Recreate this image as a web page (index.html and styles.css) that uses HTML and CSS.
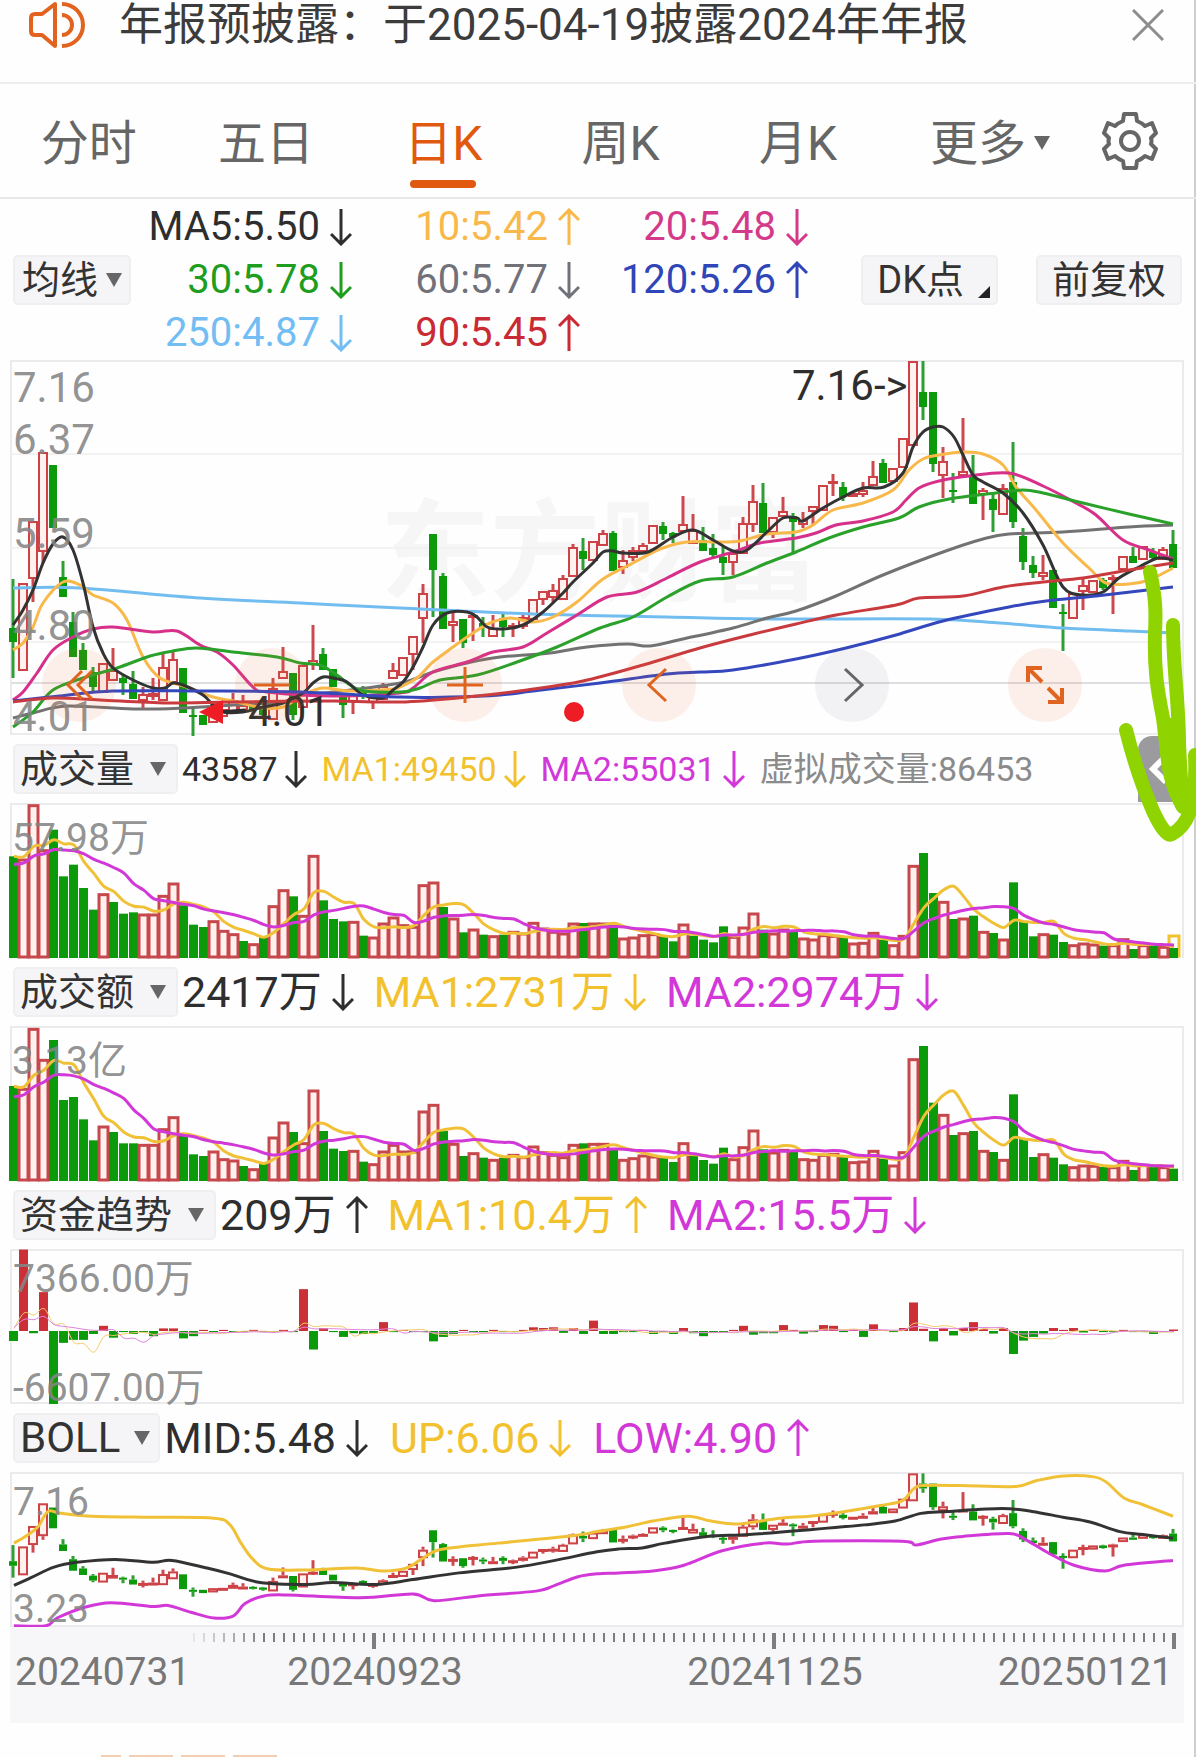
FILE: index.html
```html
<!DOCTYPE html>
<html lang="zh-CN">
<head>
<meta charset="utf-8">
<meta name="viewport" content="width=device-width, initial-scale=1">
<title>日K</title>
<link rel="stylesheet" href="styles.css">
</head>
<body>
<svg class="sprite" aria-hidden="true">
  <symbol id="down" viewBox="0 0 22 38"><path d="M11 1V36M1 26L11 36L21 26" fill="none" stroke="currentColor" stroke-width="3"/></symbol>
  <symbol id="up" viewBox="0 0 22 38"><path d="M11 37V2M1 12L11 2L21 12" fill="none" stroke="currentColor" stroke-width="3"/></symbol>
  <symbol id="caret" viewBox="0 0 16 14"><path d="M0 0H16L8 14Z" fill="currentColor"/></symbol>
</svg>
<main class="screen">
  <header class="notice">
    <svg class="horn" viewBox="0 0 56 48" aria-hidden="true"><g fill="none" stroke="currentColor" stroke-width="4" stroke-linejoin="round"><path d="M26 3V45L13 34H6Q2 34 2 30V17Q2 13 6 13H13Z"/><path d="M33 3A21 21 0 0 1 33 45"/><path d="M33 14A10 10 0 0 1 33 34"/></g></svg>
    <p class="notice-text">年报预披露：于2025-04-19披露2024年年报</p>
    <button class="icon-button" aria-label="关闭"><svg class="close" viewBox="0 0 32 32"><path d="M1 1L31 31M31 1L1 31" stroke="currentColor" stroke-width="3"/></svg></button>
  </header>

  <nav class="tabs">
    <button class="tab">分时</button>
    <button class="tab">五日</button>
    <button class="tab active">日K</button>
    <button class="tab">周K</button>
    <button class="tab">月K</button>
    <button class="tab more">更多<svg class="caret"><use href="#caret"/></svg></button>
    <button class="icon-button settings" aria-label="设置"><svg class="gear" viewBox="0 0 56 58"><g fill="none" stroke="currentColor" stroke-width="4" stroke-linejoin="round"><path d="M22 2H34L35 9Q40 11 43 14L50 11L54 21L49 26Q50 29 49 32L54 37L50 47L43 44Q40 47 35 49L34 56H22L21 49Q16 47 13 44L6 47L2 37L7 32Q6 29 7 26L2 21L6 11L13 14Q16 11 21 9Z"/><circle cx="28" cy="29" r="9"/></g></svg></button>
  </nav>

  <section class="legend">
    <button class="chip">均线<svg class="caret"><use href="#caret"/></svg></button>
    <div class="averages">
      <span class="ink">MA5:5.50<svg class="arrow"><use href="#down"/></svg></span>
      <span class="amber">10:5.42<svg class="arrow"><use href="#up"/></svg></span>
      <span class="rose">20:5.48<svg class="arrow"><use href="#down"/></svg></span>
      <span class="green">30:5.78<svg class="arrow"><use href="#down"/></svg></span>
      <span class="slate">60:5.77<svg class="arrow"><use href="#down"/></svg></span>
      <span class="blue">120:5.26<svg class="arrow"><use href="#up"/></svg></span>
      <span class="sky">250:4.87<svg class="arrow"><use href="#down"/></svg></span>
      <span class="red">90:5.45<svg class="arrow"><use href="#up"/></svg></span>
    </div>
    <div class="actions">
      <button class="chip">DK点<svg class="corner" viewBox="0 0 12 12"><path d="M12 0V12H0Z" fill="currentColor"/></svg></button>
      <button class="chip">前复权</button>
    </div>
  </section>

  <section class="panel">
    <svg id="price" class="chart" viewBox="10 360 1174 375" role="img" aria-label="日K线"></svg>
    <div class="controls">
      <button class="round" aria-label="最左"><svg viewBox="0 0 40 40"><path d="M23 6L9 20L23 34M33 6L19 20L33 34"/></svg></button>
      <button class="round" aria-label="缩小"><svg viewBox="0 0 40 40"><path d="M2 20H38"/></svg></button>
      <button class="round" aria-label="放大"><svg viewBox="0 0 40 40"><path d="M2 20H38M20 2V38"/></svg></button>
      <button class="round" aria-label="向左"><svg viewBox="0 0 40 40"><path d="M27 4L10 20L27 36"/></svg></button>
      <button class="round muted" aria-label="向右"><svg viewBox="0 0 40 40"><path d="M13 4L30 20L13 36"/></svg></button>
      <button class="round" aria-label="全屏"><svg viewBox="0 0 40 40"><path d="M3 17V3H17M3 3L17 17M37 23V37H23M37 37L23 23" stroke-width="4"/></svg></button>
    </div>
  </section>

  <section class="indicator tight">
    <button class="chip">成交量<svg class="caret"><use href="#caret"/></svg></button>
    <span class="ink">43587<svg class="arrow"><use href="#down"/></svg></span>
    <span class="gold">MA1:49450<svg class="arrow"><use href="#down"/></svg></span>
    <span class="magenta">MA2:55031<svg class="arrow"><use href="#down"/></svg></span>
    <span class="virtual">虚拟成交量:86453</span>
    <button class="drawer" aria-label="展开"><svg viewBox="0 0 20 32"><path d="M18 3L5 16L18 29" fill="none" stroke="currentColor" stroke-width="6"/></svg></button>
  </section>
  <section class="panel"><svg id="volume" class="chart" viewBox="10 -2 1174 155" role="img" aria-label="成交量"></svg></section>

  <section class="indicator">
    <button class="chip">成交额<svg class="caret"><use href="#caret"/></svg></button>
    <span class="ink">2417万<svg class="arrow"><use href="#down"/></svg></span>
    <span class="gold">MA1:2731万<svg class="arrow"><use href="#down"/></svg></span>
    <span class="magenta">MA2:2974万<svg class="arrow"><use href="#down"/></svg></span>
  </section>
  <section class="panel"><svg id="amount" class="chart" viewBox="10 -2 1174 155" role="img" aria-label="成交额"></svg></section>

  <section class="indicator">
    <button class="chip">资金趋势<svg class="caret"><use href="#caret"/></svg></button>
    <span class="ink">209万<svg class="arrow"><use href="#up"/></svg></span>
    <span class="gold">MA1:10.4万<svg class="arrow"><use href="#up"/></svg></span>
    <span class="magenta">MA2:15.5万<svg class="arrow"><use href="#down"/></svg></span>
  </section>
  <section class="panel"><svg id="flow" class="chart" viewBox="10 -2 1174 155" role="img" aria-label="资金趋势"></svg></section>

  <section class="indicator bands">
    <button class="chip">BOLL<svg class="caret"><use href="#caret"/></svg></button>
    <span class="ink">MID:5.48<svg class="arrow"><use href="#down"/></svg></span>
    <span class="gold">UP:6.06<svg class="arrow"><use href="#down"/></svg></span>
    <span class="magenta">LOW:4.90<svg class="arrow"><use href="#up"/></svg></span>
  </section>
  <section class="panel"><svg id="boll" class="chart" viewBox="10 -2 1174 155" role="img" aria-label="BOLL"></svg></section>
  <section class="panel axis"><svg id="dates" class="chart" viewBox="10 0 1174 96" role="img" aria-label="日期"></svg></section>

  <footer class="next"><span></span><span></span><span></span><span></span></footer>

  <svg class="scribble" viewBox="0 0 90 290" aria-hidden="true">
    <g fill="none" stroke="#8fd400" stroke-width="14" stroke-linecap="round" stroke-linejoin="round">
      <path d="M44 19C50 45 50 60 49 80C48 115 51 135 57 165C62 200 60 225 77 254"/>
      <path d="M67 72C67 115 73 150 73 190C74 215 76 235 76 252"/>
      <path d="M20 177C27 205 37 235 47 258C54 273 61 284 66 281C82 273 91 252 89 202"/>
    </g>
    <path d="M54 160L76 170L78 255C64 235 60 200 54 160Z" fill="#8fd400"/>
  </svg>
</main>
<script src="chart.js"></script>
</body>
</html>
```

FILE: styles.css
```css
* { box-sizing: border-box; }
body {
  margin: 0;
  background: #fefefe;
  color: #333;
  font-family: Roboto, "Noto Sans CJK SC", sans-serif;
  font-size: 40px;
}
button {
  margin: 0;
  padding: 0;
  border: 0;
  background: none;
  color: inherit;
  font: inherit;
  cursor: pointer;
}
.sprite { display: none; }
.screen {
  position: relative;
  min-height: 100vh;
  overflow: hidden;
  box-shadow: inset -2px 0 #cfcfd1;
}

.notice {
  display: flex;
  align-items: center;
  height: 84px;
  padding: 0 32px 32px 29px;
  border-bottom: 2px solid #ededed;
}
.horn { width: 56px; height: 48px; color: #e2631f; }
.notice-text {
  flex: 1;
  margin: 0 0 0 34px;
  font-size: 44px;
  line-height: 48px;
  white-space: nowrap;
  color: #3c3c3c;
}
.icon-button { display: flex; align-items: center; justify-content: center; }
.close { width: 32px; height: 32px; color: #8d8d8d; }

.tabs {
  display: grid;
  grid-template-columns: repeat(6, 1fr) 132px;
  height: 115px;
  border-bottom: 2px solid #e8e8e8;
}
.tab {
  position: relative;
  padding-bottom: 4px;
  font-size: 48px;
  color: #666;
  white-space: nowrap;
}
.tab.more { padding-right: 14px; text-align: right; }
.tab.active { color: #e0590f; }
.tab.active::after {
  content: "";
  position: absolute;
  left: 50%;
  bottom: 9px;
  width: 66px;
  height: 8px;
  margin-left: -33px;
  border-radius: 4px;
  background: #e0590f;
}
.caret { width: 16px; height: 14px; color: #666; }
.tab .caret { margin-left: 8px; vertical-align: 10px; }
.settings { color: #666; }
.gear { width: 56px; height: 58px; }

.legend {
  display: flex;
  align-items: center;
  height: 161px;
  padding: 0 14px 0 13px;
}
.chip {
  display: inline-flex;
  align-items: center;
  flex: none;
  height: 50px;
  padding: 0 7px;
  border: 2px solid #efeff1;
  border-radius: 5px;
  background: #f5f5f7;
  font-size: 38px;
  line-height: 46px;
  color: #333;
  white-space: nowrap;
}
.legend > .chip { width: 118px; justify-content: space-between; }
.averages {
  display: grid;
  grid-template-columns: 221px 228px 228px;
  grid-auto-rows: 53px;
  justify-items: end;
  align-items: center;
  white-space: nowrap;
}
.averages span, .indicator span { display: inline-flex; align-items: center; }
.arrow { width: 22px; height: 38px; margin-left: 10px; }
.actions { display: flex; gap: 38px; margin-left: auto; }
.actions .chip { padding: 0 14px; }
.corner { width: 12px; height: 12px; margin: 24px -8px 0 14px; color: #222; }

.panel { position: relative; margin: 0 12px 0 10px; }
.chart { display: block; width: 100%; height: auto; overflow: visible; }
.controls {
  position: absolute;
  left: 32px;
  right: 102px;
  bottom: 13px;
  display: flex;
  justify-content: space-between;
}
.round {
  display: flex;
  align-items: center;
  justify-content: center;
  width: 74px;
  height: 74px;
  border-radius: 50%;
  background: rgba(235, 110, 50, .1);
  color: #e0641f;
}
.round svg { width: 40px; height: 40px; fill: none; stroke: currentColor; stroke-width: 3; }
.round.muted { background: rgba(90, 90, 120, .07); color: #666; }

.indicator {
  display: flex;
  align-items: center;
  height: 68px;
  padding: 0 12px 0 13px;
  font-size: 43px;
  line-height: 48px;
  white-space: nowrap;
}
.indicator .chip { gap: 16px; padding: 0 10px 0 5px; margin-right: 4px; }
.indicator span { height: 48px; margin-right: 20px; }
.indicator .arrow { margin-left: 10px; }
.indicator.bands .chip { gap: 14px; padding-right: 8px; font-size: 42px; }
.indicator.bands span { margin-right: 22px; }
.indicator.tight { font-size: 34px; }
.indicator.tight span { margin-right: 15px; }
.indicator.tight .arrow { margin-left: 7px; }
.indicator .virtual { color: #8b8b8b; }
.drawer {
  display: flex;
  align-items: center;
  flex: none;
  width: 46px;
  height: 66px;
  margin-left: auto;
  padding-left: 10px;
  border-radius: 14px 0 0 0;
  background: #9b9a9f;
  color: #fff;
}
.drawer svg { width: 20px; height: 32px; }

.ink { color: #2e2e2e; }
.amber { color: #f8b84a; }
.rose { color: #d43a8a; }
.green { color: #1f9d1f; }
.slate { color: #71717a; }
.blue { color: #2f45b8; }
.sky { color: #72bdf3; }
.red { color: #c92a33; }
.gold { color: #f2c12e; }
.magenta { color: #d238d8; }

.axis { background: #f7f7f9; }
.next { display: flex; gap: 8px; padding: 32px 0 0 101px; }
.next span { width: 44px; height: 2px; background: #f3cdb2; }
.next span:first-child { width: 20px; }

.scribble {
  position: absolute;
  top: 553px;
  right: 0;
  width: 90px;
  height: 290px;
  pointer-events: none;
}

.chart text { font-family: Roboto, "Noto Sans CJK SC", sans-serif; }
.frame { fill: none; stroke: #ebebed; stroke-width: 2; }
.grid { stroke: #f2f2f3; stroke-width: 2; }
.grid.strong { stroke: #dedee0; }
.chart .watermark { font-size: 110px; font-weight: 700; fill: #f6f6f7; }
.scale { font-size: 39px; fill: #858585; fill-opacity: .9; }
.scale.large { font-size: 42px; }
.mark { font-size: 42px; fill: #2e2e2e; }
.day { font-size: 39px; fill: #777; }
.up { fill: #fff1ee; stroke: #cc4246; stroke-width: 2; }
.up.bar { stroke: #c6484c; stroke-width: 3; }
.down { fill: #0a9a0a; }
.wick-up { stroke: #cc4a4f; stroke-width: 3; }
.wick-down { stroke: #2f9f35; stroke-width: 3; }
.solid { fill: #cc2f36; }
.pending { fill: none; stroke: #f2c12e; stroke-width: 3; }
.line { fill: none; stroke-width: 3; stroke-linejoin: round; }
.line.thin { stroke-width: 1; }
```

FILE: chart.js
```js
const NS = 'http://www.w3.org/2000/svg';
const COUNT = 117, STEP = 10, LEFT = 13, UNIT = 3;
const xAt = i => LEFT + i * STEP + 1;

function add(svg, tag, attrs, text) {
  const el = document.createElementNS(NS, tag);
  for (const key in attrs) el.setAttribute(key, attrs[key]);
  if (text) el.textContent = text;
  svg.appendChild(el);
  return el;
}

// Rounded curve through a list of "x y" pairs
function curve(svg, points, color, cls = 'line', map = y => y) {
  const p = points.map(([x, y]) => [x, map(y)]);
  let d = `M${p[0]}`;
  for (let i = 0; i < p.length - 1; i++) {
    const a = p[i - 1] || p[i], b = p[i], c = p[i + 1], e = p[i + 2] || c;
    d += `C${b[0] + (c[0] - a[0]) / 6} ${b[1] + (c[1] - a[1]) / 6} ${c[0] - (e[0] - b[0]) / 6} ${c[1] - (e[1] - b[1]) / 6} ${c}`;
  }
  add(svg, 'path', { d, class: cls, stroke: color });
}
const pairs = s => s.split(',').map(p => p.trim().split(' ').map(Number));

// kind, high, body top, body bottom, low
const candles = `g 579 628 642 678,r 583 583 671 671,r 521 521 579 602,r 452 452 552 563,g 465 465 528 528,g 561 577 597 597,g 612 622 657 657,g 643 650 670 670,g 667 672 687 692,r 663 663 693 693,
r 648 670 681 681,g 675 678 683 695,g 671 684 699 699,r 687 694 701 708,r 678 693 697 700,r 654 667 701 701,r 650 659 683 683,g 668 668 713 713,g 708 715 717 736,g 715 715 725 725,
r 710 710 723 723,r 709 709 717 717,r 693 700 712 712,r 695 705 712 712,g 704 706 710 714,g 706 708 715 718,r 678 688 720 720,r 647 671 679 679,g 673 673 715 720,r 665 665 708 708,
r 625 660 665 670,g 648 654 670 670,g 669 669 687 687,g 693 695 705 718,r 693 695 702 714,g 686 688 697 699,r 694 697 703 709,r 683 686 700 700,r 663 670 679 679,r 657 657 676 676,
r 636 636 655 670,r 584 593 619 643,g 534 534 570 617,g 573 576 629 629,r 613 621 626 642,g 619 619 643 648,r 612 615 618 641,g 617 623 627 637,r 615 628 637 637,g 613 618 627 637,
r 623 625 628 637,r 613 617 627 629,r 599 599 620 620,r 591 591 600 605,r 584 590 598 602,r 575 578 600 600,r 544 547 577 577,g 538 551 559 570,r 541 541 561 561,r 530 533 546 546,
g 531 533 571 571,r 550 560 568 574,r 547 550 558 561,r 543 545 552 552,r 525 525 544 544,g 522 526 534 540,g 532 533 537 543,r 496 524 532 532,r 514 530 544 544,g 527 540 551 551,
g 534 548 555 558,g 547 557 563 575,r 553 553 563 575,r 517 523 554 554,r 485 501 525 532,g 483 503 533 533,r 517 517 533 538,r 497 511 517 517,g 513 516 522 552,r 512 520 525 528,
r 506 506 512 525,r 485 485 511 511,r 474 481 484 496,g 482 487 497 501,r 493 493 497 497,r 482 490 495 497,r 461 476 486 486,g 459 463 483 483,r 468 468 482 482,r 438 438 468 468,
r 361 361 446 446,g 361 392 407 420,g 392 392 464 472,r 447 461 476 498,g 473 490 492 503,r 418 471 476 476,g 455 477 504 504,r 488 490 495 520,g 493 499 510 532,r 484 488 515 515,
g 442 482 522 528,g 528 536 562 570,g 556 565 573 578,r 555 572 577 580,g 570 570 608 608,g 604 612 614 651,r 593 593 619 619,r 578 585 592 610,r 580 580 593 593,g 578 580 588 590,
r 575 577 580 614,r 556 556 570 570,g 547 556 563 563,r 546 546 560 560,g 548 552 558 560,r 547 549 560 560,g 530 544 568 568`
  .split(',').map(row => {
    const [kind, ...v] = row.trim().split(' ');
    return [kind, ...v.map(Number)];
  });

function drawCandles(svg, map) {
  candles.forEach(([kind, high, top, bottom, low], i) => {
    const x = xAt(i) - 1, t = map(top), b = Math.max(map(bottom), t + 2);
    const wick = kind === 'r' ? 'wick-up' : 'wick-down';
    if (high < top) add(svg, 'line', { x1: x, x2: x, y1: map(high), y2: t, class: wick });
    if (low > bottom) add(svg, 'line', { x1: x, x2: x, y1: b, y2: map(low), class: wick });
    if (kind === 'r') add(svg, 'rect', { x: x - 4, y: t + 1, width: 8, height: Math.max(b - t - 2, 1), class: 'up' });
    else add(svg, 'rect', { x: x - 4, y: t, width: 8, height: b - t, class: 'down' });
  });
}

function frame(svg, y, h, bottom = true) {
  add(svg, 'path', { d: `M11 ${y + h}V${y + 1}H1183V${y + h}${bottom ? 'M11 ' + (y + h - 1) + 'H1183' : ''}`, class: 'frame' });
}

// Price
const price = document.getElementById('price');
frame(price, 360, 375);
add(price, 'text', { x: 380, y: 592, class: 'watermark' }, '东方财富');
[454, 548, 642].forEach(y => add(price, 'line', { x1: 11, x2: 1183, y1: y, y2: y, class: 'grid' }));
add(price, 'line', { x1: 11, x2: 1183, y1: 683, y2: 683, class: 'grid strong' });
drawCandles(price, y => y);
curve(price, pairs('13 588,80 588,200 598,300 603,400 608,533 614,667 617,767 619,930 619,1000 623,1063 628,1130 631,1173 633'), '#72bdf0');
curve(price, pairs('13 718,33 713,67 706,133 709,183 708,233 705,283 702,300 695,333 692,400 683,433 672,467 663,500 657,550 653,587 647,627 644,650 646,683 639,733 628,767 618,796 611,836 596,883 575,943 552,983 539,1009 534,1063 532,1129 527,1173 525'), '#727272');
curve(price, pairs('13 650,23 643,33 627,43 603,63 582,80 585,93 595,113 603,127 620,143 657,160 678,187 687,213 697,233 701,263 708,283 707,303 695,323 688,350 691,393 689,400 687,417 678,433 662,453 647,473 633,490 623,510 618,533 622,553 617,577 602,603 579,633 563,660 549,687 542,717 542,740 541,767 534,796 532,813 525,833 510,863 503,893 490,909 470,923 459,939 455,963 452,983 454,1003 465,1016 487,1036 510,1063 543,1089 568,1106 583,1129 584,1149 580,1173 568'), '#f8b84a');
curve(price, pairs('13 700,23 692,37 673,53 650,73 637,93 629,113 627,153 632,177 631,200 645,217 652,233 665,253 687,267 692,333 696,400 693,413 688,433 672,467 662,493 652,523 647,547 633,577 615,607 597,637 592,667 578,700 562,733 552,760 543,796 538,816 533,836 525,863 521,893 512,906 500,919 488,939 481,969 476,1009 473,1043 486,1076 503,1096 515,1123 540,1149 550,1173 559'), '#d6308a');
curve(price, pairs('13 727,33 712,53 690,83 678,117 668,150 656,173 651,197 648,233 652,277 657,300 663,320 665,337 675,360 690,400 692,420 688,440 680,477 675,517 662,557 647,600 628,633 617,667 597,700 581,733 577,767 563,796 552,829 538,863 527,899 518,919 507,949 499,996 493,1023 490,1043 493,1083 503,1129 514,1173 524'), '#2aa12a');
curve(price, pairs('13 625,23 610,33 590,43 563,53 544,63 537,73 550,83 583,93 627,103 653,113 668,133 680,153 688,165 688,173 683,183 685,203 695,213 705,223 712,243 712,263 707,283 703,303 693,313 683,323 677,333 678,347 682,363 695,383 698,393 690,403 682,413 667,423 647,433 625,447 613,467 612,477 617,487 627,503 629,523 625,543 612,563 593,573 582,593 563,603 552,613 551,623 553,648 552,673 537,693 530,713 540,733 551,747 550,767 532,783 518,797 518,803 521,823 508,843 497,863 488,884 487,903 473,913 447,923 432,933 427,943 427,954 437,963 455,973 475,983 482,1003 493,1023 513,1043 545,1063 587,1083 595,1103 592,1119 578,1139 567,1158 558,1173 560'), '#333');
curve(price, pairs('13 701,60 696,113 691,200 691,300 692,400 697,450 697,500 695,533 691,600 683,667 674,700 672,733 670,796 659,846 648,896 635,943 621,1009 607,1046 601,1096 596,1173 587'), '#3547bd');
curve(price, pairs('13 702,53 698,100 700,167 703,233 702,333 701,400 702,467 697,527 690,583 681,643 665,700 648,750 635,796 624,836 615,896 605,919 598,963 596,1003 587,1043 582,1083 578,1129 570,1173 563'), '#c93a3f');
[['7.16', 402], ['6.37', 454], ['5.59', 548], ['4.80', 640], ['4.01', 731]].forEach(([t, y]) =>
  add(price, 'text', { x: 13, y, class: 'scale large' }, t));
add(price, 'text', { x: 792, y: 400, class: 'mark' }, '7.16->');
add(price, 'path', { d: 'M218 712L246 710', class: 'line', stroke: '#2e2e2e' });
add(price, 'path', { d: 'M199 712L223 700V724Z', fill: '#ee1c25' });
add(price, 'text', { x: 248, y: 726, class: 'mark' }, '4.01');
add(price, 'circle', { cx: 574, cy: 712, r: 10, fill: '#ee1c25' });

// Volume and turnover bars with their 5 and 10 day averages
const average = (list, i, n) => list.slice(i - n + 1, i + 1).reduce((a, b) => a + b, 0) / n;

function drawBars(id, data, history, label, labelY, pending) {
  const svg = document.getElementById(id);
  const bars = data.split(',').map(s => [s[0], Number(s.slice(1))]);
  const all = history.concat(bars.map(b => b[1]));
  frame(svg, -2, 155, false);
  if (pending) add(svg, 'rect', { x: 1169, y: 153 - pending, width: 10, height: pending - 2, class: 'pending' });
  bars.forEach(([kind, value], i) => {
    const h = value / UNIT, x = xAt(i);
    if (kind === 'r') add(svg, 'rect', { x: x - 5, y: 154 - h, width: 9, height: h - 2, class: 'up bar' });
    else add(svg, 'rect', { x: x - 5, y: 153 - h, width: 9, height: h, class: 'down' });
  });
  [[5, '#f0c137'], [10, '#d238d8']].forEach(([n, color]) =>
    curve(svg, bars.map((_, i) => [xAt(i), 153 - average(all, i + history.length, n) / UNIT]), color));
  add(svg, 'text', { x: 12, y: labelY, class: 'scale' }, label);
}

drawBars('volume',
  'g305,r297,r460,r325,g385,g245,g280,g210,g145,r193,g168,g133,g137,r132,r132,r188,r225,g158,g100,g93,r112,r83,r73,g51,r43,g62,r157,r205,g185,r128,r308,g173,g117,g110,r110,g67,r63,r105,r123,r100,r95,r220,r228,g153,r120,g77,r87,g70,r67,g70,r80,r75,r107,r90,r80,r75,r105,g105,r105,r105,g100,r60,r63,r70,r73,g65,g50,r102,g67,g55,g47,g95,r65,r93,r135,g85,r75,r87,g83,r60,r57,r70,r68,g65,r45,r47,r77,g55,r40,r68,r278,g315,g195,r170,g117,r120,g127,r80,g75,r57,g227,g110,g65,r73,g70,g48,r40,r45,r42,g37,r40,r58,g27,r40,g37,r35,g30',
  [250, 250, 260, 260, 260, 300, 305, 310, 305], '57.98万', 46, 22);

drawBars('amount',
  'g285,r278,r458,r365,g423,g243,g252,g185,g122,r165,g147,g113,g113,r110,r110,r157,r193,g138,g80,g75,r90,r67,r63,g45,r37,g52,r132,r177,g147,r115,r273,g150,g97,g90,r92,g58,r52,r90,r110,r90,r90,r210,r230,g150,r113,g75,r85,g70,r65,g70,r80,r73,r105,r88,r80,r73,r110,g113,r113,r113,g95,r65,r70,r78,r75,g70,g57,r115,g77,g63,g52,g100,r67,r103,r153,g95,r87,r95,g90,r67,r65,r80,r83,g77,r58,r60,r92,g67,r48,r88,r367,g405,g235,r200,g138,r145,g150,r92,g87,r65,g260,g127,g72,r82,g70,g50,r43,r48,r47,g42,r43,r62,g33,r50,g42,r43,g37',
  [220, 220, 220, 220, 230, 285, 285, 285, 280], '3.13亿', 46);

// Money flow around a zero line
const flow = document.getElementById('flow');
const flows = { 0: -27, 1: 220, 2: -6, 3: 105, 4: -197, 5: -32, 6: -24, 7: -24, 8: -8, 9: 14, 10: -18, 12: -8, 14: -14, 15: 7, 16: 7, 17: -20, 18: -14, 19: 3, 29: 113, 30: -50, 31: 8, 33: -16, 34: -6, 35: -8, 36: -5, 37: 24, 42: -28, 43: -16, 44: -8, 52: 10, 53: 8, 54: 10, 55: -5, 56: 8, 57: -8, 58: 28, 59: -8, 60: -8, 64: -8, 66: -8, 67: 8, 68: -6, 69: -14, 73: 14, 74: -10, 75: -6, 76: -6, 77: 16, 79: -7, 81: 16, 82: 14, 85: -16, 86: 18, 89: 8, 90: 77, 91: 6, 92: -28, 93: 8, 94: -12, 95: 8, 96: 24, 97: 5, 98: -7, 99: 8, 100: -62, 101: -26, 102: -16, 103: -7, 104: 8, 106: 8, 107: -4, 114: -8, 116: 4 };
const flowList = Array.from({ length: COUNT }, (_, i) => flows[i] ?? (i % 3 ? -3 : 3));
const ZERO = 80, FLOW_UNIT = 2.7;
frame(flow, -2, 155);
flowList.forEach((v, i) => {
  const h = Math.abs(v) / FLOW_UNIT;
  add(flow, 'rect', { x: xAt(i) - 5, y: v > 0 ? ZERO - h : ZERO, width: 9, height: h, class: v > 0 ? 'solid' : 'down' });
});
const flowAll = [0, 0, 20, 20, 20, 10, 20, 20, 10].concat(flowList);
[[5, '#f5ca6a'], [10, '#df86dc']].forEach(([n, color]) =>
  curve(flow, flowList.map((_, i) => [xAt(i), ZERO - average(flowAll, i + 9, n) / FLOW_UNIT]), color, 'line thin'));
add(flow, 'text', { x: 13, y: 41, class: 'scale' }, '7366.00万');
add(flow, 'text', { x: 13, y: 150, class: 'scale' }, '-6607.00万');

// Bollinger bands over the same candles
const boll = document.getElementById('boll');
const band = y => (y - 1485) * 0.96;
frame(boll, -2, 155);
drawCandles(boll, y => (y - 363) * 0.329);
curve(boll, pairs('14 1557,27 1549,38 1540,48 1524,61 1526,92 1529,153 1530,214 1531,230 1538,241 1557,253 1574,268 1584,306 1585,356 1583,383 1586,406 1583,421 1574,436 1565,459 1561,498 1557,574 1549,597 1545,627 1540,653 1534,688 1529,711 1534,738 1537,780 1531,810 1529,845 1524,879 1518,902 1513,914 1500,925 1497,960 1497,1015 1498,1036 1492,1063 1487,1094 1488,1107 1494,1124 1510,1143 1517,1173 1529'), '#f0c137', 'line', band);
curve(boll, pairs('14 1601,31 1593,54 1582,77 1577,115 1574,153 1577,172 1575,207 1583,230 1589,260 1598,306 1600,333 1598,375 1600,413 1595,459 1588,517 1582,555 1575,597 1566,619 1563,642 1562,665 1557,707 1550,749 1548,810 1543,864 1538,895 1534,921 1526,948 1524,1002 1521,1032 1524,1063 1530,1090 1535,1120 1545,1143 1548,1173 1552'), '#333', 'line', band);
curve(boll, pairs('14 1643,46 1643,57 1635,84 1624,111 1619,153 1623,168 1622,191 1629,214 1635,233 1633,245 1620,264 1612,287 1611,360 1614,413 1610,434 1617,478 1612,536 1607,555 1601,578 1592,597 1589,619 1588,653 1586,684 1580,722 1565,764 1557,787 1558,814 1555,902 1555,916 1559,940 1553,963 1550,1009 1547,1025 1553,1048 1567,1074 1580,1105 1586,1124 1580,1173 1575'), '#d238d8', 'line', band);
add(boll, 'text', { x: 13, y: 41, class: 'scale' }, '7.16');
add(boll, 'text', { x: 13, y: 148, class: 'scale' }, '3.23');

// Date axis, its ticks fading in from the left
const dates = document.getElementById('dates');
for (let i = 18; i < COUNT; i++) {
  const major = i === 36 || i === 76 || i === 116;
  add(dates, 'line', { x1: xAt(i), x2: xAt(i), y1: 6, y2: major ? 22 : 15, stroke: '#7d7d7d', 'stroke-width': major ? 4 : 2, opacity: Math.min(1, (i - 17) / 8) });
}
[['20240731', 15, 'start'], ['20240923', 375, 'middle'], ['20241125', 775, 'middle'], ['20250121', 1173, 'end']].forEach(([t, x, anchor]) =>
  add(dates, 'text', { x, y: 58, 'text-anchor': anchor, class: 'day' }, t));
```
